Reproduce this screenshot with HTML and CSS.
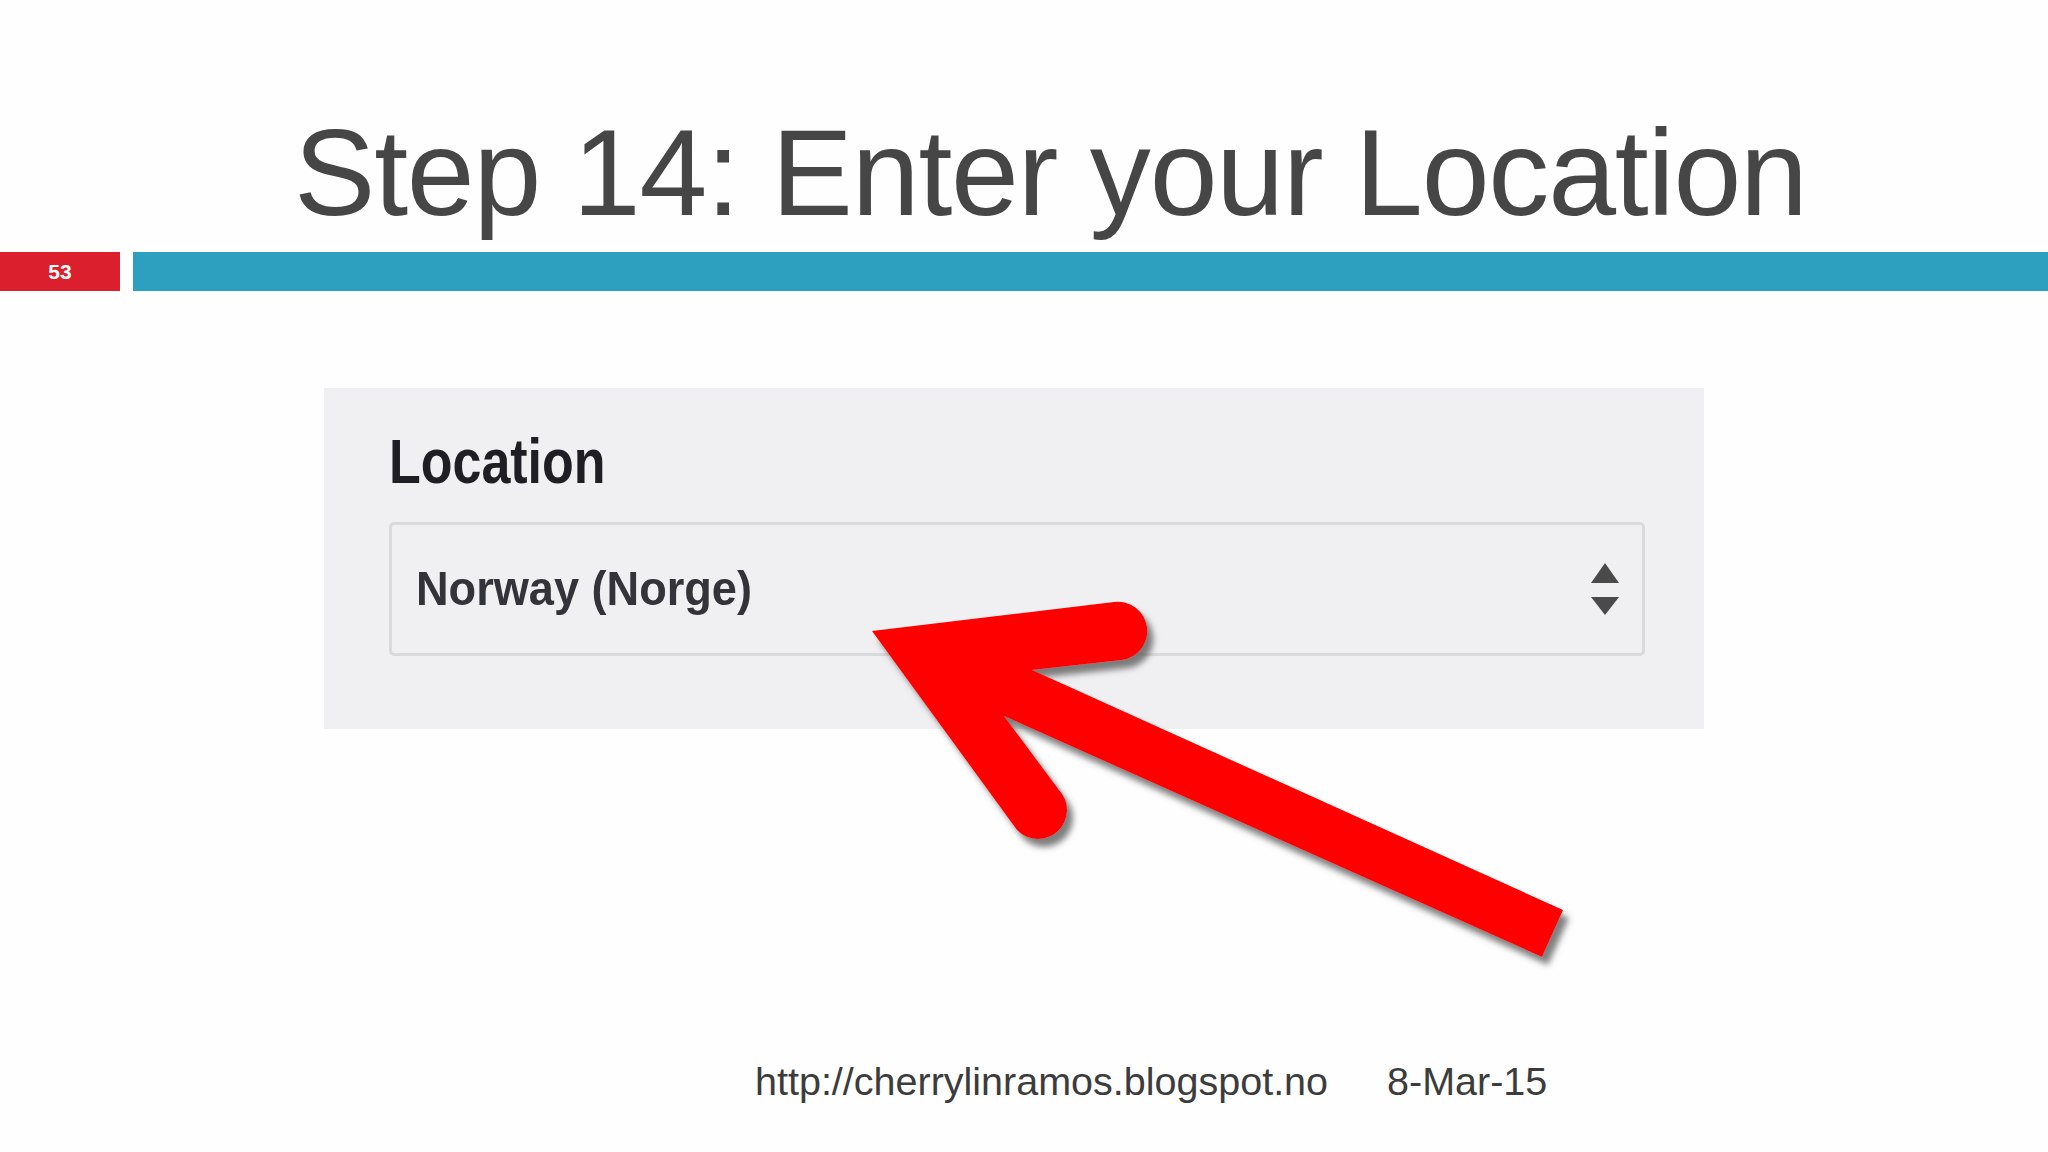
FILE: index.html
```html
<!DOCTYPE html>
<html>
<head>
<meta charset="utf-8">
<link rel="stylesheet" href="styles.css">
</head>
<body>
<div class="slide">
  <h1 class="title">Step 14: Enter your Location</h1>
  <div class="rule">
    <div class="num">53</div>
    <div class="band"></div>
  </div>
  <div class="panel">
    <div class="label"><span class="label-text">Location</span></div>
    <div class="select">
      <span class="value">Norway (Norge)</span>
      <svg class="stepper" width="28" height="52" viewBox="0 0 28 52">
        <polygon points="14,0 28,20 0,20" fill="#4a4a4a"/>
        <polygon points="0,34 28,34 14,52" fill="#4a4a4a"/>
      </svg>
    </div>
  </div>
  <div class="footer">
    <span>http://cherrylinramos.blogspot.no</span>
    <span>8-Mar-15</span>
  </div>
  <svg class="arrow" width="2048" height="1152" viewBox="0 0 2048 1152">
    <defs>
      <filter id="sh" x="-10%" y="-10%" width="130%" height="130%">
        <feDropShadow dx="6" dy="8" stdDeviation="3" flood-color="#555" flood-opacity="0.75"/>
      </filter>
    </defs>
    <path filter="url(#sh)" fill="#ff0000" d="M 872 631 L 1114 602 A 29 29 0 0 1 1122 660 L 1032 670 L 1563 910 L 1542 957 L 1004 716 L 1059 790 A 29 29 0 0 1 1017 830 Z"/>
  </svg>
</div>
</body>
</html>
```
FILE: styles.css
```css
html, body {
  margin: 0;
  padding: 0;
  background: #fefefe;
}
.slide {
  position: relative;
  width: 2048px;
  height: 1152px;
  overflow: hidden;
  font-family: "Liberation Sans", Arial, sans-serif;
}
.title {
  margin: 112px 0 0 0;
  padding-left: 294px;
  font-size: 122px;
  line-height: 122px;
  font-weight: normal;
  letter-spacing: -1.2px;
  color: #464646;
  white-space: nowrap;
}
.rule {
  display: flex;
  gap: 13px;
  margin-top: 18px;
  height: 39px;
}
.num {
  width: 120px;
  background: #dc1f2c;
  color: #fff;
  font-weight: bold;
  font-size: 21px;
  display: flex;
  align-items: center;
  justify-content: center;
}
.band {
  flex: 1;
  background: #2da0bf;
}
.panel {
  margin: 97px 0 0 324px;
  width: 1380px;
  height: 341px;
  box-sizing: border-box;
  background: #f0eff1;
  padding: 42px 59px 0 65px;
}
.label {
  height: 63px;
  line-height: 63px;
}
.label-text {
  display: inline-block;
  font-size: 63px;
  font-weight: bold;
  color: #1e1e24;
  transform: scaleX(0.825);
  transform-origin: left center;
}
.select {
  margin-top: 29px;
  width: 1256px;
  height: 134px;
  box-sizing: border-box;
  border: 3px solid #dadadc;
  border-radius: 5px;
  display: flex;
  align-items: center;
  justify-content: space-between;
  padding: 0 23px 0 24px;
}
.value {
  display: inline-block;
  font-size: 48px;
  line-height: 48px;
  font-weight: bold;
  color: #33333a;
  transform: scaleX(0.94);
  transform-origin: left center;
}
.stepper {
  display: block;
}
.footer {
  margin-top: 332px;
  padding-left: 755px;
  display: flex;
  gap: 59px;
  font-size: 39.5px;
  line-height: 40px;
  color: #3c3c3c;
}
.arrow {
  position: absolute;
  left: 0;
  top: 0;
  pointer-events: none;
}
```
